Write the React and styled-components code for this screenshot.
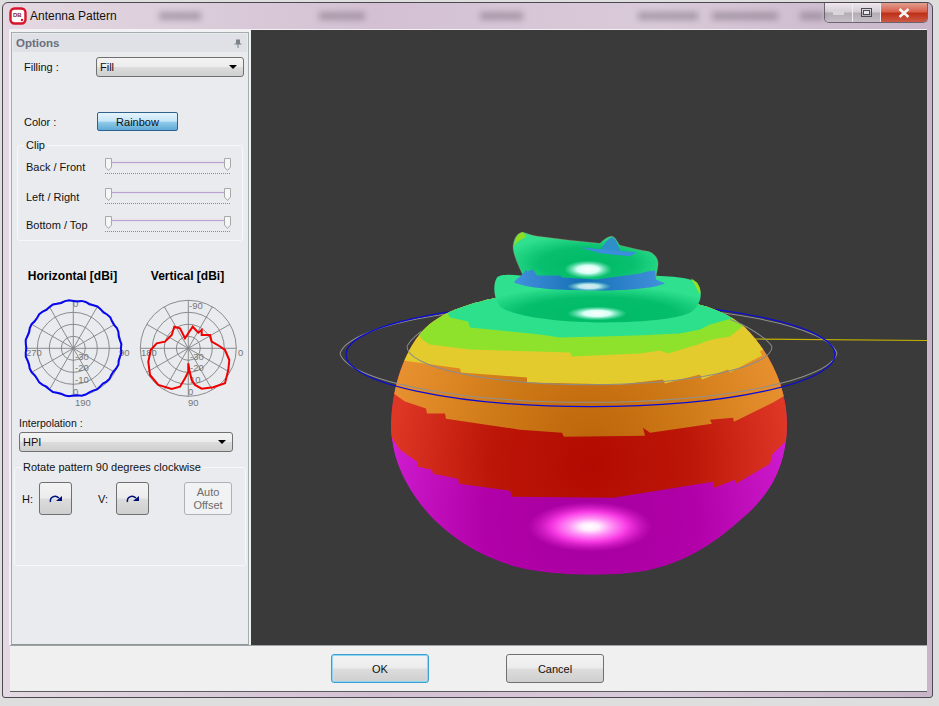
import styled, { createGlobalStyle } from "styled-components";

const GlobalStyle = createGlobalStyle`
  html, body {
    margin: 0;
    padding: 0;
    overflow: hidden;
  }
  body {
    background: #dcdcdc;
    font-family: "Liberation Sans", Arial, sans-serif;
    font-size: 11px;
    color: #111;
  }
`;

const Desktop = styled.div`
  width: 939px;
  height: 706px;
  padding: 2px 6px 8px 2px;
  box-sizing: border-box;
  background: #dedede;
`;

const Window = styled.div`
  height: 100%;
  display: flex;
  flex-direction: column;
  box-sizing: border-box;
  padding: 0 5px 5px 6px;
  border: 1px solid #4c4850;
  border-radius: 6px 6px 3px 3px;
  background: linear-gradient(90deg, #e4d9e2 0%, #d3c1d3 40%, #d9cad9 70%, #c8b5c9 100%);
`;

const TitleBar = styled.div`
  height: 26px;
  flex: none;
  display: flex;
  align-items: center;
`;

const TitleText = styled.span`
  margin-left: 3px;
  font-size: 12px;
  color: #111;
  width: 129px;
`;

const Smudge = styled.span`
  height: 8px;
  width: ${(p) => p.$w}px;
  margin-right: ${(p) => p.$gap}px;
  background: #6c6070;
  opacity: 0.45;
  filter: blur(3px);
`;

const WindowControls = styled.div`
  margin-left: auto;
  margin-right: -1px;
  align-self: flex-start;
  display: flex;
  height: 19px;
  border: 1px solid #6a6470;
  border-top: none;
  border-radius: 0 0 5px 5px;
  overflow: hidden;
`;

const ControlButton = styled.div`
  width: ${(p) => (p.$close ? 46 : 27)}px;
  display: flex;
  align-items: center;
  justify-content: center;
  border-left: ${(p) => (p.$first ? "none" : "1px solid #f0ecf0")};
  background: ${(p) =>
    p.$close
      ? "linear-gradient(#e0a090 0%, #d8604c 45%, #bf3018 55%, #cc5a44 100%)"
      : "linear-gradient(#efe9ee 0%, #d5ced6 45%, #b4adb6 55%, #c6bfc8 100%)"};
`;

const Workspace = styled.div`
  height: 615px;
  flex: none;
  display: flex;
  background: #f1f2f4;
  border-top: 1px solid #f4f0f4;
`;

const Panel = styled.div`
  width: 238px;
  margin: 2px 1px 0 2px;
  box-sizing: border-box;
  flex: none;
  display: flex;
  flex-direction: column;
  background: #e9ebef;
  border: 1px solid #a4acac;
  border-bottom: 1px solid #8c9494;
`;

const PanelHeader = styled.div`
  height: 18px;
  margin: 1px 1px 0;
  padding: 0 5px 0 3px;
  display: flex;
  align-items: center;
  justify-content: space-between;
  background: #dfe1e6;
  color: #6a6e7c;
  font-weight: bold;
  font-size: 11.5px;
`;

const FieldRow = styled.div`
  display: flex;
  align-items: center;
  margin: ${(p) => p.$margin};
`;

const Label = styled.span`
  width: ${(p) => p.$w}px;
  margin-left: ${(p) => p.$ml || 0}px;
  flex: none;
  font-size: 11px;
`;

const Select = styled.div`
  width: ${(p) => p.$w}px;
  height: 20px;
  box-sizing: border-box;
  padding: 0 6px 0 3px;
  display: flex;
  align-items: center;
  justify-content: space-between;
  border: 1px solid #707070;
  border-radius: 3px;
  font-size: 11px;
  background: linear-gradient(#f3f3f3 0%, #ececec 48%, #dcdcdc 52%, #cfcfcf 100%);
`;

const Caret = styled.span`
  width: 0;
  height: 0;
  border-left: 4px solid transparent;
  border-right: 4px solid transparent;
  border-top: 4px solid #000;
`;

const RainbowButton = styled.div`
  width: 81px;
  height: 19px;
  box-sizing: border-box;
  display: flex;
  align-items: center;
  justify-content: center;
  border: 1px solid #2c628b;
  border-radius: 2px;
  font-size: 11px;
  background: linear-gradient(#e6f4fc 0%, #c4e6f8 48%, #8fcbea 54%, #5fa9d5 100%);
`;

const GroupBox = styled.fieldset`
  margin: ${(p) => p.$margin};
  width: ${(p) => p.$w}px;
  height: ${(p) => p.$h}px;
  box-sizing: border-box;
  padding: ${(p) => p.$top || 0}px 0 0 ${(p) => p.$pad}px;
  min-width: 0;
  border: 1px solid #f6f7f9;
  border-radius: 3px;
`;

const Legend = styled.legend`
  margin-left: ${(p) => p.$indent}px;
  padding: 0 2px;
  font-size: 11px;
  line-height: 12px;
`;

const ClipRow = styled.div`
  height: ${(p) => p.$h}px;
  display: flex;
  align-items: center;
`;

const Slider = styled.div`
  position: relative;
  width: 126px;
  height: 16px;
  margin-top: -3px;
  background: repeating-linear-gradient(90deg, #8a8a8a 0 1px, transparent 1px 2px) left bottom / 100% 1px no-repeat;
`;

const SliderTrack = styled.div`
  position: absolute;
  left: 3px;
  right: 3px;
  top: 4px;
  height: 1px;
  background: #b9a2d2;
  box-shadow: 0 0 2px #d9cbe8;
`;

const SliderThumb = styled.svg`
  position: absolute;
  top: 0;
  ${(p) => (p.$right ? "right: 0;" : "left: 0;")}
`;

const ChartTitles = styled.div`
  display: grid;
  grid-template-columns: 115px 115px;
  margin: 28px 0 0 3px;
  text-align: center;
  font-weight: bold;
  font-size: 12px;
  color: #000;
`;

const ChartRow = styled.div`
  display: grid;
  grid-template-columns: 115px 115px;
  margin: 7px 0 0 3px;
`;

const InterpolationLabel = styled.div`
  margin: 6px 0 2px 7px;
  font-size: 10.5px;
  line-height: 14px;
`;

const SelectWrap = styled.div`
  margin-left: 7px;
`;

const RotateRow = styled.div`
  display: flex;
  align-items: center;
  margin-top: 9px;
`;

const ToolButton = styled.div`
  width: 33px;
  height: 33px;
  flex: none;
  box-sizing: border-box;
  display: flex;
  align-items: center;
  justify-content: center;
  border: 1px solid #707070;
  border-radius: 3px;
  background: linear-gradient(#f3f3f3 0%, #ececec 48%, #dcdcdc 52%, #cfcfcf 100%);
`;

const AutoOffset = styled.div`
  width: 48px;
  height: 33px;
  margin-left: 35px;
  box-sizing: border-box;
  display: flex;
  align-items: center;
  justify-content: center;
  text-align: center;
  border: 1px solid #aeb2b6;
  border-radius: 3px;
  color: #6c6c6c;
  font-size: 11px;
  line-height: 13px;
  background: #f1f2f4;
`;

const Viewport = styled.div`
  flex: 1;
  min-width: 0;
  margin-left: 1px;
  background: #3a3a3a;
`;

const Scene = styled.svg`
  display: block;
  width: 100%;
  height: 100%;
`;

const Footer = styled.div`
  flex: 1;
  display: flex;
  align-items: center;
  padding-left: 321px;
  gap: 77px;
  background: #f0f0f0;
  border-top: 1px solid #a0a4a8;
  border-bottom: 1px solid #5c5c60;
  margin-left: 1px;
`;

const DialogButton = styled.div`
  width: 98px;
  height: 29px;
  box-sizing: border-box;
  display: flex;
  align-items: center;
  justify-content: center;
  font-size: 11px;
  border: 1px solid ${(p) => (p.$active ? "#3c9fd0" : "#707070")};
  box-shadow: ${(p) => (p.$active ? "inset 0 0 0 1px #8fd6f2" : "none")};
  border-radius: 3px;
  background: linear-gradient(#f3f3f3 0%, #ececec 48%, #dcdcdc 52%, #cfcfcf 100%);
`;

const Arrow = () => (
  <svg width="14" height="10" viewBox="0 0 14 10">
    <path d="M1.5 8 C0.5 3 6 0.5 10 4" fill="none" stroke="#00107a" strokeWidth="1.4" />
    <path d="M7 7 L13 7 L13 2 Z" fill="#00107a" />
  </svg>
);

const ClipSlider = () => (
  <Slider>
    <SliderTrack />
    <SliderThumb width="7" height="13" viewBox="0 0 7 13">
      <path d="M0.5 0.5 H6.5 V9 L3.5 12.5 L0.5 9 Z" fill="#f6f6f6" stroke="#a8a8a8" />
    </SliderThumb>
    <SliderThumb $right width="7" height="13" viewBox="0 0 7 13">
      <path d="M0.5 0.5 H6.5 V9 L3.5 12.5 L0.5 9 Z" fill="#f6f6f6" stroke="#a8a8a8" />
    </SliderThumb>
  </Slider>
);

const CX = 58.3;
const CY = 58.3;

const spokes = Array.from({ length: 6 }, (_, i) => {
  const a = (i * Math.PI) / 6;
  return [CX + 48 * Math.cos(a), CY + 48 * Math.sin(a), CX - 48 * Math.cos(a), CY - 48 * Math.sin(a)];
});

const bluePoints = Array.from({ length: 72 }, (_, i) => {
  const a = (i * Math.PI) / 36;
  const r = 47.6 + 0.7 * Math.sin(i * 1.7) - (i > 4 && i < 14 ? 0.8 : 0);
  return `${(CX + r * Math.cos(a)).toFixed(1)},${(CY + r * Math.sin(a)).toFixed(1)}`;
}).join(" ");

// traced from the vertical cut, in 3x crop units
const redTrace = [
  [175, 220], [178, 240], [185, 270], [195, 285], [215, 296], [250, 292], [285, 280], [295, 240],
  [298, 210], [285, 180], [268, 168], [245, 155], [240, 135], [215, 135], [215, 120], [205, 128],
  [188, 110], [175, 130], [165, 145], [150, 115], [133, 110], [125, 135], [105, 155], [80, 160],
  [62, 180], [55, 215], [60, 255], [85, 285], [125, 297], [150, 290], [165, 265], [175, 245], [175, 220],
]
  .map(([x, y]) => `${(x / 3).toFixed(1)},${(y / 3).toFixed(1)}`)
  .join(" ");

const PolarChart = ({ points, color, labels }) => (
  <svg width="115" height="120" viewBox="0 0 115 120">
    <g fill="none" stroke="#808080" strokeWidth="0.9">
      {[48, 36, 24, 12].map((r) => (
        <circle key={r} cx={CX} cy={CY} r={r} />
      ))}
      {spokes.map((s, i) => (
        <line key={i} x1={s[0]} y1={s[1]} x2={s[2]} y2={s[3]} />
      ))}
    </g>
    <g fill="#777" fontSize="9.5" fontFamily="Liberation Sans, Arial, sans-serif">
      {labels.map(([x, y, t]) => (
        <text key={t + x + y} x={x} y={y}>
          {t}
        </text>
      ))}
    </g>
    <polygon points={points} fill="none" stroke={color} strokeWidth="2" />
  </svg>
);

const band = (pts) =>
  `M${pts.map((p) => p.join(",")).join(" L")} L800,200 L380,200 Z`;

const BODY =
  "M497,298 C470,304 440,312 422,332 C405,352 392,385 391,425 C391,455 402,482 425,510 C450,540 490,563 530,570 C565,576 615,577 650,570 C695,560 725,535 752,510 C775,487 787,460 787,425 C787,390 772,355 745,328 C730,315 712,308 695,304 Z";

const redEdge = [
  [388, 432], [400, 450], [417, 462], [418, 467], [432, 470], [433, 474], [458, 479], [459, 484],
  [510, 491], [512, 497], [613, 498], [713, 482], [714, 488], [735, 480], [736, 484], [770, 464],
  [772, 455], [787, 440], [792, 432],
];
const orangeEdge = [
  [388, 390], [405, 402], [426, 409], [427, 414], [445, 414], [446, 419], [520, 430], [562, 433],
  [564, 437], [645, 436], [643, 428], [650, 433], [712, 424], [710, 420], [733, 418], [734, 422],
  [773, 403], [795, 390],
];
const yellowEdge = [
  [395, 345], [403, 361], [460, 369], [461, 373], [527, 378], [527, 383], [620, 385], [663, 380],
  [665, 384], [700, 375], [702, 380], [728, 370], [730, 373], [762, 356], [760, 352], [780, 340],
];
const limeEdge = [
  [410, 320], [422, 340], [430, 345], [470, 350], [570, 353], [572, 357], [640, 354], [660, 351],
  [668, 354], [698, 345], [712, 340], [730, 337], [745, 325], [770, 310],
];
const tealEdge = [
  [425, 300], [447, 312], [450, 318], [468, 322], [470, 328], [540, 335], [560, 338], [600, 337],
  [635, 336], [680, 334], [700, 330], [710, 325], [735, 318], [760, 300],
];

const BLUE_ZONE =
  "M514,283 C516,279 522,277 526,270 L527,272 L533,270 L537,276 L560,276 L562,278 L596,280 L640,274 L647,272 L655,271 L656,280 C660,282 664,283 665,284 C650,290 620,291 597,291 C570,291 530,290 514,283 Z";

const Model = () => (
  <Scene viewBox="251 31 676 614" preserveAspectRatio="none">
    <defs>
      <clipPath id="body">
        <path d={BODY} />
      </clipPath>
      <radialGradient id="magenta" gradientUnits="userSpaceOnUse" cx="590" cy="520" r="210">
        <stop offset="0" stopColor="#a500a0" />
        <stop offset="0.5" stopColor="#b100a8" />
        <stop offset="1" stopColor="#cf1ccf" />
      </radialGradient>
      <radialGradient id="red" gradientUnits="userSpaceOnUse" cx="590" cy="465" r="200">
        <stop offset="0" stopColor="#b20a00" />
        <stop offset="0.5" stopColor="#bc1608" />
        <stop offset="1" stopColor="#de3726" />
      </radialGradient>
      <radialGradient id="orange" gradientUnits="userSpaceOnUse" cx="590" cy="445" r="200">
        <stop offset="0" stopColor="#bc640a" />
        <stop offset="0.5" stopColor="#cf7a18" />
        <stop offset="1" stopColor="#e7902f" />
      </radialGradient>
      <radialGradient id="tier" cx="0.5" cy="0.85" r="0.62">
        <stop offset="0" stopColor="#00ba66" />
        <stop offset="0.62" stopColor="#05be6c" />
        <stop offset="1" stopColor="#2fe08e" />
      </radialGradient>
      <radialGradient id="tierTop" cx="0.5" cy="0.62" r="0.58">
        <stop offset="0" stopColor="#00ba66" />
        <stop offset="0.55" stopColor="#07bf6e" />
        <stop offset="1" stopColor="#2fe08e" />
      </radialGradient>
      <radialGradient id="shinePink">
        <stop offset="0" stopColor="#ffffff" />
        <stop offset="0.14" stopColor="#ffeefd" />
        <stop offset="0.35" stopColor="#ff90f6" />
        <stop offset="0.6" stopColor="#f83ae4" />
        <stop offset="1" stopColor="#e020d0" stopOpacity="0" />
      </radialGradient>
      <radialGradient id="shineCyan">
        <stop offset="0" stopColor="#ffffff" />
        <stop offset="0.45" stopColor="#d8fff6" />
        <stop offset="1" stopColor="#80f0c8" stopOpacity="0" />
      </radialGradient>
      <linearGradient id="blue" x1="0" x2="1" y1="0" y2="0">
        <stop offset="0" stopColor="#4291dc" />
        <stop offset="0.45" stopColor="#1670b6" />
        <stop offset="1" stopColor="#4291dc" />
      </linearGradient>
    </defs>

    {/* back half of the rings and the axis */}
    <line x1="753" y1="339.5" x2="927" y2="341" stroke="#c4b400" strokeWidth="1.2" />
    <path d="M340,354 A249,52 0 0 1 837,354" fill="none" stroke="#909090" strokeWidth="1" />
    <path d="M346,355 A244.500,52 0 0 1 835,355" fill="none" stroke="#0b0bd8" strokeWidth="1.2" />

    <g clipPath="url(#body)">
      <path d={BODY} fill="url(#magenta)" />
      <ellipse cx="590" cy="527" rx="62" ry="25" fill="url(#shinePink)" />
      <path d={band(redEdge)} fill="url(#red)" />
      <path d={band(orangeEdge)} fill="url(#orange)" />
      <path d={band(yellowEdge)} fill="#e3cb2d" />
      <path d={band(limeEdge)} fill="#8fe22c" />
      <path d={band(tealEdge)} fill="#2de08c" />
    </g>

    {/* lower tier */}
    <path
      d="M497,278 C493,284 493,298 500,307 C510,316 555,323 597,323 C640,323 680,320 692,312 C702,304 703,292 697,283 C690,277 660,276 640,276 L520,276 C510,275 500,275 497,278 Z"
      fill="url(#tier)"
    />
    <path d="M691,279 C697,282 702,288 700,296 C698,291 695,285 691,279 Z" fill="#9ae01e" />
    <ellipse cx="597" cy="314" rx="30" ry="7" fill="url(#shineCyan)" />

    {/* upper tier */}
    <path
      d="M513,247 C514,238 518,233 523,233 C528,234 530,236 538,237 C560,240 580,242 600,244 C604,240 608,237 612,237 C616,238 618,244 620,246 C630,248 640,251 648,252 C655,254 659,260 658,266 C657,274 655,280 655,284 L526,284 C522,272 513,258 513,247 Z"
      fill="url(#tierTop)"
      stroke="#d0705a"
      strokeWidth="0.3"
    />
    <path d="M514,247 C515,238 519,233 523,233 C525,235 526,237 526,238 C520,240 516,244 514,247 Z" fill="#8fdc20" />
    <path d="M600,252 C604,244 609,238 613,238 C616,240 619,248 621,254 Z" fill="#2f8fc8" />
    <path d="M580,248 L600,250 L637,253 L630,257 L600,254 Z" fill="#3b8edb" />
    <path d={BLUE_ZONE} fill="url(#blue)" />
    <ellipse cx="588" cy="270" rx="24" ry="9" fill="url(#shineCyan)" />
    <ellipse cx="589" cy="287" rx="22" ry="5" fill="url(#shineCyan)" opacity="0.85" />

    {/* front half of the rings */}
    <path d="M407,347 A182,38 0 0 0 772,347" fill="none" stroke="#8c8c8c" strokeWidth="1" />
    <path d="M407,347 C410,340 416,336 421,332" fill="none" stroke="#8c8c8c" strokeWidth="1" />
    <path d="M772,347 C766,338 745,325 730,320" fill="none" stroke="#8c8c8c" strokeWidth="1" />
    <path d="M340,354 A249,52 0 0 0 837,354" fill="none" stroke="#909090" strokeWidth="1" />
    <path d="M346,355 A244.500,52 0 0 0 835,355" fill="none" stroke="#0b0bd8" strokeWidth="1.2" />
  </Scene>
);

export default function App() {
  return (
    <>
      <GlobalStyle />
      <Desktop>
        <Window>
          <TitleBar>
            <svg width="18" height="18" viewBox="0 0 18 18">
              <rect x="1.5" y="1.5" width="15" height="15" rx="4" fill="#fff" stroke="#d8142c" strokeWidth="2.4" />
              <text x="4" y="10.500" fontSize="6" fontWeight="bold" fill="#8a2030" fontFamily="Liberation Sans, sans-serif">
                DB
              </text>
              <circle cx="13" cy="13" r="1.200" fill="#d8142c" />
            </svg>
            <TitleText>Antenna Pattern</TitleText>
            <Smudge $w={42} $gap={118} />
            <Smudge $w={46} $gap={115} />
            <Smudge $w={44} $gap={115} />
            <Smudge $w={60} $gap={14} />
            <Smudge $w={66} $gap={22} />
            <Smudge $w={24} $gap={0} />
            <WindowControls>
              <ControlButton $first>
                <svg width="11" height="4" viewBox="0 0 11 4">
                  <rect width="11" height="4" fill="#d9d4da" />
                </svg>
              </ControlButton>
              <ControlButton>
                <svg width="11" height="9" viewBox="0 0 11 9">
                  <rect x="0.5" y="0.5" width="10" height="8" fill="none" stroke="#4a4a55" />
                  <rect x="2.5" y="2.5" width="6" height="4" fill="#e8e8ee" stroke="#4a4a55" />
                </svg>
              </ControlButton>
              <ControlButton $close>
                <svg width="12" height="10" viewBox="0 0 12 10">
                  <path d="M1.5 1 L10.5 9 M10.5 1 L1.5 9" stroke="#f4f4f4" strokeWidth="2.6" />
                </svg>
              </ControlButton>
            </WindowControls>
          </TitleBar>

          <Workspace>
            <Panel>
              <PanelHeader>
                Options
                <svg width="8" height="9" viewBox="0 0 8 9">
                  <path d="M2 0.5 H6 V4.500 H7.500 V5.500 H4.500 V9 H3.500 V5.500 H0.500 V4.500 H2 Z" fill="#7c8088" />
                </svg>
              </PanelHeader>

              <FieldRow $margin="5px 0 0 12px">
                <Label $w={72}>Filling :</Label>
                <Select $w={148}>
                  Fill
                  <Caret />
                </Select>
              </FieldRow>

              <FieldRow $margin="35px 0 0 12px">
                <Label $w={73}>Color :</Label>
                <RainbowButton>Rainbow</RainbowButton>
              </FieldRow>

              <GroupBox $margin="8px 0 0 5px" $w={226} $h={102} $pad={8} $top={1}>
                <Legend $indent={-2}>Clip</Legend>
                <ClipRow $h={30}>
                  <Label $w={79}>Back / Front</Label>
                  <ClipSlider />
                </ClipRow>
                <ClipRow $h={30}>
                  <Label $w={79}>Left / Right</Label>
                  <ClipSlider />
                </ClipRow>
                <ClipRow $h={26}>
                  <Label $w={79}>Bottom / Top</Label>
                  <ClipSlider />
                </ClipRow>
              </GroupBox>

              <ChartTitles>
                <span>Horizontal [dBi]</span>
                <span>Vertical [dBi]</span>
              </ChartTitles>

              <ChartRow>
                <PolarChart
                  points={bluePoints}
                  color="#0808f0"
                  labels={[
                    [58, 17, "0"],
                    [11, 66, "270"],
                    [104, 66, "90"],
                    [60, 70, "-30"],
                    [60, 81, "-20"],
                    [60, 93, "-10"],
                    [58, 105, "0"],
                    [60, 116, "190"],
                  ]}
                />
                <PolarChart
                  points={redTrace}
                  color="#f00000"
                  labels={[
                    [59, 19, "-90"],
                    [11, 66, "180"],
                    [108, 66, "0"],
                    [60, 70, "-30"],
                    [60, 81, "-20"],
                    [60, 93, "10"],
                    [58, 105, "0"],
                    [58, 116, "90"],
                  ]}
                />
              </ChartRow>

              <InterpolationLabel>Interpolation :</InterpolationLabel>
              <SelectWrap>
                <Select $w={214}>
                  HPI
                  <Caret />
                </Select>
              </SelectWrap>

              <GroupBox $margin="9px 0 0 2px" $w={232} $h={105} $pad={7}>
                <Legend $indent={-1}>Rotate pattern 90 degrees clockwise</Legend>
                <RotateRow>
                  <Label $w={17}>H:</Label>
                  <ToolButton>
                    <Arrow />
                  </ToolButton>
                  <Label $w={18} $ml={26}>
                    V:
                  </Label>
                  <ToolButton>
                    <Arrow />
                  </ToolButton>
                  <AutoOffset>
                    Auto
                    <br />
                    Offset
                  </AutoOffset>
                </RotateRow>
              </GroupBox>
            </Panel>

            <Viewport>
              <Model />
            </Viewport>
          </Workspace>

          <Footer>
            <DialogButton $active>OK</DialogButton>
            <DialogButton>Cancel</DialogButton>
          </Footer>
        </Window>
      </Desktop>
    </>
  );
}
